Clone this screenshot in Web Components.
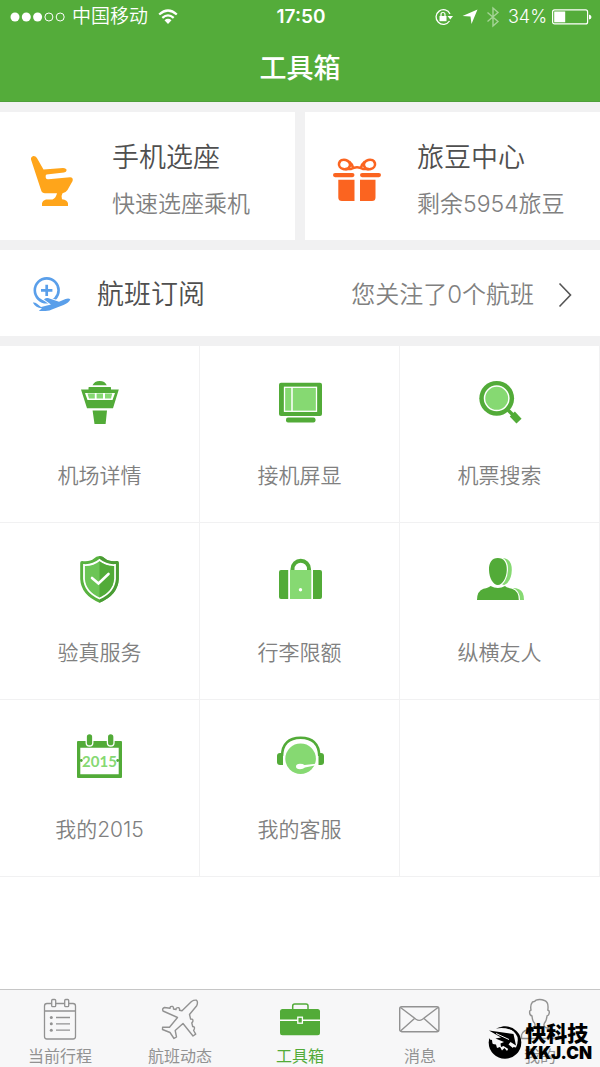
<!DOCTYPE html>
<html lang="zh-CN">
<head>
<meta charset="utf-8">
<meta name="viewport" content="width=device-width, initial-scale=1">
<title>工具箱</title>
<style>
  html, body { margin: 0; background: #fff; }
  body {
    font-family: Inter, "Noto Sans CJK SC", sans-serif;
    --green: #52ab38;
    --light: #86d972;
    --ink: #4f4f4f;
    --muted: #808080;
    --gap: #f1f1f2;
  }
</style>
</head>
<body>
<toolbox-app></toolbox-app>

<script>
const ICONS = {
  seat: [48, 52, `<path fill="#ffa51a" d="M3 4.500Q2.600 1.500 5.500 1Q8.200.8 9.200 3.500L15.500 14.500L35 12.900Q38.500 13 38.600 15.200Q38.500 17 36 17.500L18.500 19.600Q17.300 20.200 17.700 22.500Q18.200 24.600 20.500 24.300L42 22.300Q45.500 22.300 44.600 26L39.500 35Q38 37.500 34.500 38.300Q32.800 41 34 44.300Q39.700 45 40 48.500V51H14V48.500Q14.300 45.500 18 44.500H24.500Q28 43 29 38.300H17Q14 38.300 13.200 35.500Z"/>`],
  gift: [48, 48, `<g fill="#fb6420"><rect y="16" width="21.500" height="4.200" rx="2.100"/><rect x="27" y="16" width="21" height="4.200" rx="2.100"/><path d="M5.300 22.700H21.500V44H9Q5.300 44 5.300 40.500ZM27 22.700H42.500V40.500Q42.500 44 39 44H27Z"/></g><g fill="none" stroke="#fb6420" stroke-width="2.600"><ellipse cx="11.500" cy="7.500" rx="5.600" ry="4.700" transform="rotate(15 11.500 7.500)"/><ellipse cx="36.500" cy="7.500" rx="5.600" ry="4.700" transform="rotate(-15 36.500 7.500)"/><path d="M12 12H18Q24 8.500 30 12H36M16 4.500Q19 7 20 10.500M32 4.500Q29 7 28 10.500"/></g>`],
  subscribe: [40, 38, `<circle cx="14.700" cy="14.300" r="11.900" fill="none" stroke="#5a9fea" stroke-width="2.600"/><path d="M14.700 8.800V20M9 14.400H20.400" stroke="#5a9fea" stroke-width="2.700"/><path fill="#5a9fea" stroke="#fff" stroke-width="2" paint-order="stroke" d="M.8 26.600Q3 26.300 5 27.800L9 31L19 28.500L12 23.500Q12.800 21.500 16 22L27 25.800L33.500 23Q37 21.800 38.300 23.500Q37 26.500 31.500 29L20.500 33.200Q18 35 13.500 35H6.800L10 32.300Q4 32.500.8 26.600Z"/>`],
  tower: [52, 52, `<g fill="var(--green)"><path d="M18.500 9.300Q20.500 5 25.600 5Q31 5 32.800 9.300ZM14.500 13.500V11.500Q14.500 11 15.200 11H36.300Q37 11 37 11.500V13.500H44.800L39 32.300H13L7 13.500ZM18.600 34.400H33L31.600 48H20.500Z"/></g><path fill="#fff" d="M11 17H41L38.500 24H13.500Z"/><g fill="var(--light)"><path d="M13.500 17.500H20.800V22.500H15ZM22.600 17.500H29V22.500H22.600ZM31 17.500H38.200L37 22.500H31Z"/></g>`],
  monitor: [52, 52, `<rect x="5" y="6.700" width="43" height="33.300" rx="2" fill="var(--green)"/><rect x="10.500" y="11.300" width="32" height="24" fill="var(--light)" stroke="#fff" stroke-width="1.300"/><path d="M18 11V35" stroke="#fff" stroke-width="1.500"/><rect x="12" y="41.500" width="29.500" height="5" rx="2" fill="var(--green)"/>`],
  search: [52, 52, `<circle cx="22.700" cy="22.300" r="17.400" fill="var(--green)"/><circle cx="22.700" cy="22.300" r="12.200" fill="var(--light)" stroke="#fff" stroke-width="1.500"/><path d="M34 34L39 39" stroke="var(--green)" stroke-width="3.500"/><path d="M38.300 38L45 45.200" stroke="var(--green)" stroke-width="7"/>`],
  shield: [52, 52, `<path fill="#58b23f" d="M25.500 3Q29 3 31 5.500Q35 9 43 8Q44.800 8 44.800 10V26Q44 42 25.500 49.700Q7 42 6.200 26V10Q6.200 8 8 8Q16 9 20 5.500Q22 3 25.500 3Z"/><path fill="#4a9c34" d="M25.500 3Q29 3 31 5.500Q35 9 43 8Q44.800 8 44.800 10V26Q44 42 25.500 49.700Z"/><path fill="#6cc556" stroke="#fff" stroke-width="1.800" d="M25.500 7Q32 12.500 41 12V26Q40 39 25.500 45.500Q11 39 10 26V12Q19 12.500 25.500 7Z"/><path fill="var(--green)" d="M25.500 8.200Q32 13.200 40.100 12.900V26Q39 38.300 25.500 44.500Z"/><path d="M18 25L24.500 30.500L34.500 21" fill="none" stroke="#fff" stroke-width="2.600" stroke-linecap="round"/>`],
  luggage: [52, 52, `<path d="M18.500 17V16A8 8 0 0 1 35 16V17" fill="none" stroke="var(--green)" stroke-width="4"/><path fill="var(--green)" d="M7 17H14.200V46H7Q5 46 5 44V19Q5 17 7 17ZM39 17H46Q48 17 48 19V44Q48 46 46 46H39Z"/><path fill="var(--light)" d="M16 17H37.300V46H16Z"/><circle cx="26.500" cy="36.800" r="1.700" fill="#fff"/>`],
  friends: [52, 52, `<g fill="var(--light)"><path d="M29 5Q37.800 6 37.800 17Q37.500 28 30.500 32Q27 32 27 28ZM38 35Q42 34.800 45 36.300Q50 38.500 50 47H42Z"/></g><path fill="var(--green)" stroke="#fff" stroke-width="2.400" paint-order="stroke" d="M3 47Q3 38 9.500 35.800Q15 34.500 16.500 33Q24 37 31 33Q32 34.500 38 35.800Q44.800 38 44.800 47Z"/><path fill="var(--green)" stroke="#fff" stroke-width="2.400" paint-order="stroke" d="M23.800 5C30 5 33 9.500 32.800 17C32.500 25 28.500 32 23.800 32S15.200 25 15 17C14.800 9.500 18 5 23.800 5Z"/>`],
  year: [52, 52, `<path fill="var(--green)" fill-rule="evenodd" d="M4 11H47Q48 11 48 12V47Q48 48 47 48H4Q3 48 3 47V12Q3 11 4 11ZM6.300 17.800V44.200H44.700V17.800Z"/><g fill="var(--green)" stroke="#fff" stroke-width="1.300"><rect x="12.200" y="3.500" width="6.600" height="12.500" rx="3.300"/><rect x="33.400" y="3.500" width="6.600" height="12.500" rx="3.300"/></g><circle cx="7.300" cy="30.500" r="1.400" fill="var(--green)"/><circle cx="43.700" cy="30.500" r="1.400" fill="var(--green)"/><text x="25.500" y="37" text-anchor="middle" font-family="Lato, sans-serif" font-size="15" font-weight="700" fill="var(--light)">2015</text>`],
  service: [52, 52, `<circle cx="26.600" cy="28.700" r="15.300" fill="var(--light)"/><path d="M8 26Q8.500 8 26.600 7.800Q44.800 8 45.300 26" fill="none" stroke="var(--green)" stroke-width="2.600"/><path fill="var(--green)" d="M9 23H6Q3 23 3 26V32Q3 35 6 35H9ZM44.500 23H47Q50 23 50 26V32Q50 35 47 35H44.500Z"/><path fill="#fff" d="M22 36.500Q22 33.800 26 33.800Q29 33.800 30.500 35L42 33.800V35.200L31 37.500Q29 39.300 26 39.300Q22 39.300 22 36.500Z"/>`],
  trips: [44, 42, `<g fill="none" stroke="currentColor" stroke-width="1.300"><path d="M13.500 5.500H9Q6.500 5.500 6.500 8V38.500Q6.500 41 9 41H35Q37.500 41 37.500 38.500V8Q37.500 5.500 35 5.500H30.500M17.800 5.500H26.500M6.500 13H37.500M18 19.500H32M18 25.800H32M18 32.200H32"/><rect x="13.700" y="1.500" width="4" height="7.200" rx="1"/><rect x="26.700" y="1.500" width="4" height="7.200" rx="1"/></g><g fill="currentColor"><circle cx="13.300" cy="19.500" r="1.500"/><circle cx="13.300" cy="25.800" r="1.500"/><circle cx="13.300" cy="32.200" r="1.500"/></g>`],
  plane: [44, 42, `<path fill="none" stroke="currentColor" stroke-width="1.400" stroke-linejoin="round" d="M33.500 3.500Q36 1.800 38.500 2.200Q40.300 4 38.700 7.800L31.500 16.500L32.600 21Q35.500 20.800 34.800 23.500L33.800 25L34.700 28.500Q37 28.600 36.300 31L35.600 32.500L37.700 36.200L35 38L25 25.500L17.200 32.500L18.500 39L16 40.500L12 34.500L4.500 31.500L4.600 29.200L11.500 29.300L19.500 19.500L5 13Q3.800 10.500 6.500 9.500L12 10.300Q12 8 14.500 8.400Q15.800 9 15.500 11L18 11.500Q18 9.300 20.500 9.700Q22 10.300 21.500 12.200L24 12.800Z"/>`],
  toolbox: [44, 42, `<path d="M14.700 11V8Q14.700 6 16.700 6H28Q30 6 30 8V11" fill="none" stroke="currentColor" stroke-width="1.500"/><rect x="2" y="11" width="40" height="26.300" rx="2.500" fill="currentColor"/><path d="M2 22.300H42" stroke="#fff" stroke-width="1.400"/><rect x="19.800" y="19.200" width="4.600" height="6" fill="currentColor" stroke="#fff" stroke-width="1.300"/>`],
  mail: [44, 42, `<g fill="none" stroke="currentColor" stroke-width="1.400"><rect x="1.700" y="8.700" width="39.200" height="25" rx="2"/><path d="M2.500 9.500L18 21.200Q21.200 23.500 24.500 21.200L40 9.500M2.500 33L16.500 20.500M40 33L26 20.500"/></g>`],
  me: [44, 42, `<path fill="none" stroke="currentColor" stroke-width="1.400" d="M3.500 40.500V37Q4 32.500 15.500 29.500Q18 28 16.500 25Q14.500 23.500 14 18Q11.500 17.500 11.600 14Q11.500 12.500 13 12Q12 7 14.500 4Q17 3.500 18 2.200Q22 .8 26.500 2.500Q31 4 29.800 12Q31.500 12.500 31.300 14.500Q31 17.500 29 18Q28.500 23 26.500 25Q25 28 27.500 29.500Q39.500 32.500 40.500 37V40.500Z"/>`],
  chevron: [16, 26, `<path d="M1.500 1.500L12.500 13L1.500 24.500" fill="none" stroke="#555" stroke-width="1.600"/>`],
  signal: [56, 10, `<g fill="#fff"><circle cx="5" cy="5" r="4.500"/><circle cx="16.300" cy="5" r="4.500"/><circle cx="27.600" cy="5" r="4.500"/></g><g fill="none" stroke="#fff"><circle cx="38.900" cy="5" r="4"/><circle cx="50.200" cy="5" r="4"/></g>`],
  wifi: [20, 16, `<g fill="none" stroke="#fff" stroke-width="2.300"><path d="M1.200 5.500Q10-2.500 18.800 5.500M4.300 8.800Q10 4 15.700 8.800"/></g><path fill="#fff" d="M6.500 11.200Q10 8.300 13.500 11.200L10 15Z"/>`],
  lock: [20, 18, `<path d="M16 6A7.300 7.300 0 1 0 15.500 13" fill="none" stroke="#fff" stroke-width="1.300"/><path d="M13.500 8H19L16.300 11.500Z" fill="#fff"/><rect x="5.500" y="8" width="7" height="5.200" fill="#fff"/><path d="M7 8V6.500Q7 4.500 9 4.500T11 6.500V8" fill="none" stroke="#fff" stroke-width="1.200"/>`],
  arrow: [16, 16, `<path d="M15.500.5L9.500 15L8.500 7.500L.5 7Z" fill="#fff"/>`],
  bluetooth: [14, 20, `<path d="M1.500 5.500L12 14.500L7 19V1L12 5.500L1.500 14.500" fill="none" stroke="#a5d496" stroke-width="1.400"/>`],
  battery: [40, 16, `<rect x=".6" y=".9" width="35" height="14" rx="2" fill="none" stroke="#fff" stroke-width="1.200"/><rect x="2.200" y="2.500" width="11" height="10.800" fill="#fff"/><path d="M37 5.500Q39.500 6 39.500 8T37 10.500Z" fill="#fff"/>`],
  bird: [36, 36, `<circle cx="18" cy="18.500" r="16.300" fill="#000"/><path fill="#f7f7f8" d="M0 4L10 1L18 3.500Q27 5 30.500 13Q31.500 18 29 23.500L26.500 23L25 25.500L22 23.500L20 27L17.500 24L15 26.500L13 23L10 24L9 20.500L5.500 20L5 16L0 15Z"/><path fill="#000" d="M2 6.500L26.500 10L29 21.500L23.500 18L21.500 20.500L31 28L28 29L16.500 22L14 23L13.500 19.500L17 18L8.500 14.500L14 13.500ZM9 4.500Q19-.5 28.500 8Q19 2.500 9 4.500ZM2 14Q1.500 20 5.500 26L8 22Q4 19 2 14Z"/><path d="M9 9.500L22 15.500" stroke="#f7f7f8" stroke-width="1"/>`]
};

function define(name, render) {
  customElements.define(name, class extends HTMLElement {
    connectedCallback() {
      if (this.shadowRoot) return;
      const template = document.createElement('template');
      template.innerHTML = render(this);
      this.attachShadow({ mode: 'open' }).append(template.content.cloneNode(true));
    }
  });
}

define('app-icon', el => {
  const [w, h, art] = ICONS[el.getAttribute('name')];
  return `<style>:host{display:block;flex:none}svg{display:block;overflow:visible}</style>
    <svg width="${w}" height="${h}" viewBox="0 0 ${w} ${h}" aria-hidden="true">${art}</svg>`;
});

define('status-bar', () => `
  <style>
    :host { display: grid; grid-template-columns: 1fr auto 1fr; align-items: center; height: 33px; padding: 0 8px 0 10px; color: #fff; font-size: 19px; line-height: 24px; font-weight: 350; }
    div { display: flex; align-items: center; gap: 8px; }
    .left { gap: 6px; }
    .left app-icon:last-child { margin-left: 4px; }
    .right { justify-content: flex-end; }
    .charge { display: flex; align-items: center; gap: 5px; font-size: 18px; }
    time { font-weight: 600; }
  </style>
  <div class="left"><app-icon name="signal"></app-icon><span>中国移动</span><app-icon name="wifi"></app-icon></div>
  <time>17:50</time>
  <div class="right"><app-icon name="lock"></app-icon><app-icon name="arrow"></app-icon><app-icon name="bluetooth"></app-icon>
    <span class="charge"><span>34%</span><app-icon name="battery"></app-icon></span></div>`);

define('nav-header', () => `
  <style>
    :host { display: block; background: #54ac3a; border-bottom: 1px solid #4f9f3a; }
    h1 { margin: 0; height: 68px; line-height: 72px; text-align: center; color: #fff; font-size: 27px; font-weight: 500; }
  </style>
  <status-bar></status-bar>
  <h1><slot></slot></h1>`);

define('promo-card', el => `
  <style>
    :host { display: block; background: #fff; }
    a { display: flex; align-items: center; height: 128px; padding: 6px 0 0 28px; gap: 36px; text-decoration: none; color: var(--ink); box-sizing: border-box; }
    app-icon { margin-top: 4px; }
    strong, small { display: block; white-space: nowrap; }
    strong { font-size: 27px; line-height: 40px; font-weight: 350; }
    small { margin-top: 9px; font-size: 23px; line-height: 34px; font-weight: 350; color: var(--muted); }
  </style>
  <a href="#"><app-icon name="${el.getAttribute('icon')}"></app-icon>
    <span><strong><slot></slot></strong><small><slot name="note"></slot></small></span></a>`);

define('subscribe-row', () => `
  <style>
    :host { display: block; background: #fff; }
    a { display: flex; align-items: center; height: 86px; padding: 4px 26px 0 32px; box-sizing: border-box; text-decoration: none; color: var(--ink); font-weight: 350; }
    strong { margin-left: 25px; font-size: 27px; line-height: 40px; font-weight: 350; }
    span { margin: 0 24px 0 auto; font-size: 24px; line-height: 36px; color: var(--muted); }
  </style>
  <a href="#"><app-icon name="subscribe"></app-icon><strong><slot></slot></strong><span><slot name="note"></slot></span><app-icon name="chevron"></app-icon></a>`);

define('tool-tile', el => `
  <style>
    :host { display: block; border: solid #f1f1f2; border-width: 0 1px 1px 0; }
    a { display: flex; flex-direction: column; align-items: center; height: 176px; padding-top: 30px; box-sizing: border-box; gap: 32px; text-decoration: none; color: var(--muted); font-size: 21px; line-height: 32px; font-weight: 350; }
  </style>
  ${el.hasAttribute('icon') ? `<a href="#"><app-icon name="${el.getAttribute('icon')}"></app-icon><span><slot></slot></span></a>` : ''}`);

define('tab-item', el => `
  <style>
    :host { display: block; flex: 1; }
    a { display: flex; flex-direction: column; align-items: center; padding-top: 8px; gap: 4px; text-decoration: none; color: #929292; font-size: 16px; line-height: 24px; }
    :host([current]) a { color: var(--green); }
  </style>
  <a href="#" ${el.hasAttribute('current') ? 'aria-current="page"' : ''}><app-icon name="${el.getAttribute('icon')}"></app-icon><span><slot></slot></span></a>`);

define('site-mark', () => `
  <style>
    :host { position: absolute; right: 8px; bottom: 6px; display: flex; align-items: center; gap: 2px; color: #000; pointer-events: none; }
    b, i { display: block; font-style: normal; font-weight: 900; white-space: nowrap; }
    b { font-size: 21px; line-height: 22px; }
    i { font-size: 17px; line-height: 16px; }
  </style>
  <app-icon name="bird"></app-icon><span><b>快科技</b><i>KKJ.CN</i></span>`);

define('tab-bar', () => `
  <style>
    :host { display: block; position: relative; height: 77px; background: #f7f7f8; border-top: 1px solid #c6c6c6; }
    nav { display: flex; }
  </style>
  <nav aria-label="主导航">
    <tab-item icon="trips">当前行程</tab-item>
    <tab-item icon="plane">航班动态</tab-item>
    <tab-item icon="toolbox" current>工具箱</tab-item>
    <tab-item icon="mail">消息</tab-item>
    <tab-item icon="me">我的</tab-item>
  </nav>
  <site-mark></site-mark>`);

define('toolbox-app', () => `
  <style>
    :host { display: flex; flex-direction: column; min-height: 100vh; }
    main { flex: 1; }
    .panels { display: grid; gap: 10px; padding: 10px 0; background: var(--gap); }
    .cards { display: grid; grid-template-columns: 1fr 1fr; gap: 10px; }
    .tiles { display: grid; grid-template-columns: repeat(3, 1fr); }
    tab-bar { flex: none; }
  </style>
  <nav-header>工具箱</nav-header>
  <main>
    <div class="panels">
      <div class="cards">
        <promo-card icon="seat">手机选座<span slot="note">快速选座乘机</span></promo-card>
        <promo-card icon="gift">旅豆中心<span slot="note">剩余5954旅豆</span></promo-card>
      </div>
      <subscribe-row>航班订阅<span slot="note">您关注了0个航班</span></subscribe-row>
    </div>
    <div class="tiles">
      <tool-tile icon="tower">机场详情</tool-tile>
      <tool-tile icon="monitor">接机屏显</tool-tile>
      <tool-tile icon="search">机票搜索</tool-tile>
      <tool-tile icon="shield">验真服务</tool-tile>
      <tool-tile icon="luggage">行李限额</tool-tile>
      <tool-tile icon="friends">纵横友人</tool-tile>
      <tool-tile icon="year">我的2015</tool-tile>
      <tool-tile icon="service">我的客服</tool-tile>
      <tool-tile></tool-tile>
    </div>
  </main>
  <tab-bar></tab-bar>`);
</script>
</body>
</html>
